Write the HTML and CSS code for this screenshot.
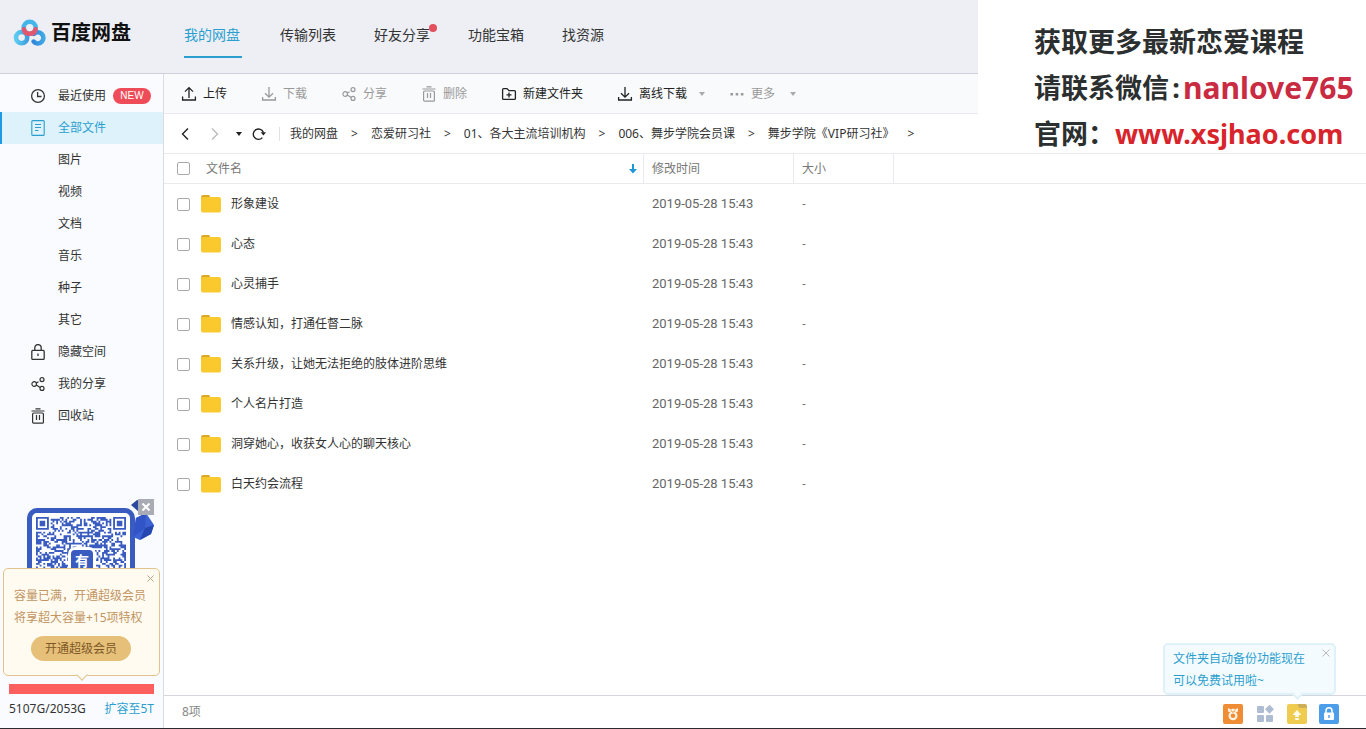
FILE: index.html
```html
<!DOCTYPE html>
<html lang="zh-CN">
<head>
<meta charset="utf-8">
<title>百度网盘</title>
<link rel="stylesheet" href="styles.css">
</head>
<body>
<svg class="defs" width="0" height="0" aria-hidden="true">
  <defs>
    <symbol id="share" viewBox="0 0 16 16"><g fill="none" stroke="currentColor" stroke-width="1.2"><circle cx="4.2" cy="8" r="2.3"/><circle cx="12" cy="3.6" r="2"/><circle cx="12" cy="12.4" r="2"/><path d="M6.3 7 8.6 5.8M6.3 9 10.2 11.4"/></g></symbol>
    <symbol id="trash" viewBox="0 0 16 16"><g fill="none" stroke="currentColor" stroke-width="1.2"><path d="M1.5 3H14.5M5.5.8H10.5M6.5 7V12M9.5 7V12"/><rect x="2.6" y="5" width="10.8" height="10.2" rx="1"/></g></symbol>
    <symbol id="down" viewBox="0 0 16 16"><path d="M8 1V11M4 7.2 8 11.2 12 7.2M1.6 11V14H14.4V11" fill="none" stroke="currentColor" stroke-width="1.3"/></symbol>
    <symbol id="folder" viewBox="0 0 20 18"><path d="M0 3Q0 0 2 0H8L10 3V8H0Z" fill="#d9a928"/><path d="M0 3.6Q0 2 1.6 2H18Q20 2 20 4V15.4Q20 17.4 18 17.4H2Q0 17.4 0 15.4Z" fill="#f9c92e"/></symbol>
    <symbol id="cross" viewBox="0 0 8 8"><path d="M.5 .5 7.5 7.5M7.5 .5 .5 7.5" stroke="currentColor" fill="none"/></symbol>
  </defs>
</svg>
<header class="header">
  <h1 class="brand">
    <svg width="33" height="27" viewBox="0 0 33 27" aria-hidden="true">
      <defs>
        <linearGradient id="left"><stop offset="0" stop-color="#5ccbf0"/><stop offset="1" stop-color="#3c9fe0"/></linearGradient>
        <linearGradient id="right"><stop offset="0" stop-color="#2f88dc"/><stop offset="1" stop-color="#3fa8e6"/></linearGradient>
      </defs>
      <g fill="none" stroke-width="4.6" stroke-linecap="round">
        <circle cx="8.6" cy="18.6" r="5.6" stroke="url(#left)"/>
        <path d="M20.6 22.6A5.6 5.6 0 1 0 21 14.8" stroke="url(#right)"/>
        <circle cx="16.7" cy="8.8" r="6" stroke="#45b6ea"/>
        <path d="M10.9 10.3A6 6 0 0 0 22.5 10.3" stroke="#e2566e"/>
      </g>
    </svg>
    <span>百度网盘</span>
  </h1>
  <nav class="tabs">
    <a class="tab tab-active" href="#">我的网盘</a>
    <a class="tab" href="#">传输列表</a>
    <a class="tab" href="#">好友分享<i class="dot"></i></a>
    <a class="tab" href="#">功能宝箱</a>
    <a class="tab" href="#">找资源</a>
  </nav>
</header>
<div class="body">
  <aside class="sidebar">
    <nav class="menu">
      <a class="item" href="#"><svg class="ico" viewBox="0 0 16 16"><g fill="none" stroke="currentColor" stroke-width="1.3"><circle cx="8" cy="8" r="6.4"/><path d="M7.6 4V8.5H11.5"/></g></svg>最近使用<b class="new">NEW</b></a>
      <a class="item item-active" href="#"><svg class="ico" viewBox="0 0 16 16"><g fill="none" stroke="currentColor" stroke-width="1.1"><rect x="1.8" y=".6" width="12.4" height="14.8" rx="1"/><path d="M5 4.5H11M5 7.5H11M5 10.5H8.5"/></g></svg>全部文件</a>
      <a class="item sub" href="#">图片</a>
      <a class="item sub" href="#">视频</a>
      <a class="item sub" href="#">文档</a>
      <a class="item sub" href="#">音乐</a>
      <a class="item sub" href="#">种子</a>
      <a class="item sub" href="#">其它</a>
      <a class="item" href="#"><svg class="ico" viewBox="0 0 16 16"><g fill="none" stroke="currentColor" stroke-width="1.3"><rect x="1.8" y="6.4" width="12.4" height="9" rx="1"/><path d="M4.8 6.4V3.8A3.2 3.2 0 0 1 11.2 3.8V6.4M8 9.4V12"/></g></svg>隐藏空间</a>
      <a class="item" href="#"><svg class="ico"><use href="#share"/></svg>我的分享</a>
      <a class="item" href="#"><svg class="ico"><use href="#trash"/></svg>回收站</a>
    </nav>
    <div class="promo">
      <div class="qr-frame">
        <svg class="qr" viewBox="0 0 49 49" aria-label="二维码"><path id="modules" fill="#3a5cc0"/></svg>
        <span class="qr-mark">有</span>
      </div>
      <svg class="gems" width="24" height="44" viewBox="0 0 24 44" aria-hidden="true"><path d="M1 6 7 1 13 3V10L9 13Z" fill="#2b4a9e"/><path d="M6 19 16 14 24 26 21 35 10 41 3 38Z" fill="#3c62d4"/><path d="M6 19 16 14 15 29 3 38Z" fill="#3154c6"/><path d="M15 29 24 26 21 35 10 41Z" fill="#2646b2"/></svg>
      <button class="promo-close" aria-label="关闭"><svg width="8" height="8" stroke-width="2"><use href="#cross"/></svg></button>
    </div>
    <section class="notice">
      <button class="x notice-x" aria-label="关闭"><svg width="7" height="7"><use href="#cross"/></svg></button>
      <p>容量已满，开通超级会员</p>
      <p>将享超大容量+15项特权</p>
      <button class="vip">开通超级会员</button>
    </section>
    <div class="quota-bar"></div>
    <div class="quota"><span>5107G/2053G</span><a href="#">扩容至5T</a></div>
  </aside>
  <main class="main">
    <div class="toolbar">
      <button class="tool"><svg class="ico" viewBox="0 0 16 16"><path d="M8 12V1.8M4 5.6 8 1.6 12 5.6M1.6 10.6V14H14.4V10.6" fill="none" stroke="currentColor" stroke-width="1.3"/></svg>上传</button>
      <button class="tool off"><svg class="ico"><use href="#down"/></svg>下载</button>
      <button class="tool off"><svg class="ico"><use href="#share"/></svg>分享</button>
      <button class="tool off"><svg class="ico"><use href="#trash"/></svg>删除</button>
      <button class="tool"><svg class="ico" viewBox="0 0 16 16"><path d="M1.6 3.6Q1.6 2.6 2.6 2.6H6L8 4.6H13.4Q14.4 4.6 14.4 5.6V12.4Q14.4 13.4 13.4 13.4H2.6Q1.6 13.4 1.6 12.4ZM8 6.4V11.4M5.5 8.9H10.5" fill="none" stroke="currentColor" stroke-width="1.3"/></svg>新建文件夹</button>
      <button class="tool with-caret"><svg class="ico"><use href="#down"/></svg>离线下载<i class="caret"></i></button>
      <button class="tool off with-caret"><svg class="ico" viewBox="0 0 16 16"><path d="M1.5 7H4V9.4H1.5ZM6.7 7H9.2V9.4H6.7ZM11.9 7H14.4V9.4H11.9Z" fill="currentColor"/></svg>更多<i class="caret caret-far"></i></button>
    </div>
    <div class="path">
      <div class="history">
        <button aria-label="后退"><svg width="8" height="12" viewBox="0 0 8 12"><path d="M7 .5 1.5 6 7 11.5" fill="none" stroke="#222" stroke-width="1.4"/></svg></button>
        <button aria-label="前进"><svg width="8" height="12" viewBox="0 0 8 12"><path d="M1 .5 6.5 6 1 11.5" fill="none" stroke="#bbb" stroke-width="1.4"/></svg></button>
        <button aria-label="历史"><svg width="6" height="4" viewBox="0 0 6 4"><path d="M0 0H6L3 4Z" fill="#222"/></svg></button>
        <button aria-label="刷新"><svg width="14" height="14" viewBox="0 0 14 14"><path d="M10.4 10.6A5.2 5.2 0 1 1 11.4 5.4" fill="none" stroke="#222" stroke-width="1.4"/><path d="M8.6 5.2H14L11.5 8.6Z" fill="#222"/></svg></button>
      </div>
      <nav class="crumbs">
        <a href="#">我的网盘</a><span>&gt;</span><a href="#">恋爱研习社</a><span>&gt;</span><a href="#">01、各大主流培训机构</a><span>&gt;</span><a href="#">006、舞步学院会员课</a><span>&gt;</span><a href="#">舞步学院《VIP研习社》</a><span>&gt;</span>
      </nav>
    </div>
    <div class="list">
      <table class="files">
        <colgroup><col class="c-name"><col class="c-time"><col class="c-size"><col></colgroup>
        <thead>
          <tr>
            <th><div class="cell"><input type="checkbox" aria-label="全选"><span class="head-name">文件名</span><svg class="sort" width="8" height="10" viewBox="0 0 8 10"><path d="M3 0H5V5H8L4 9.6 0 5H3Z" fill="#1e96d8"/></svg></div></th>
            <th>修改时间</th><th>大小</th><th></th>
          </tr>
        </thead>
        <tbody>
          <tr><td><label class="cell"><input type="checkbox"><svg class="fold"><use href="#folder"/></svg>形象建设</label></td><td class="time">2019-05-28 15:43</td><td>-</td><td></td></tr>
          <tr><td><label class="cell"><input type="checkbox"><svg class="fold"><use href="#folder"/></svg>心态</label></td><td class="time">2019-05-28 15:43</td><td>-</td><td></td></tr>
          <tr><td><label class="cell"><input type="checkbox"><svg class="fold"><use href="#folder"/></svg>心灵捕手</label></td><td class="time">2019-05-28 15:43</td><td>-</td><td></td></tr>
          <tr><td><label class="cell"><input type="checkbox"><svg class="fold"><use href="#folder"/></svg>情感认知，打通任督二脉</label></td><td class="time">2019-05-28 15:43</td><td>-</td><td></td></tr>
          <tr><td><label class="cell"><input type="checkbox"><svg class="fold"><use href="#folder"/></svg>关系升级，让她无法拒绝的肢体进阶思维</label></td><td class="time">2019-05-28 15:43</td><td>-</td><td></td></tr>
          <tr><td><label class="cell"><input type="checkbox"><svg class="fold"><use href="#folder"/></svg>个人名片打造</label></td><td class="time">2019-05-28 15:43</td><td>-</td><td></td></tr>
          <tr><td><label class="cell"><input type="checkbox"><svg class="fold"><use href="#folder"/></svg>洞穿她心，收获女人心的聊天核心</label></td><td class="time">2019-05-28 15:43</td><td>-</td><td></td></tr>
          <tr><td><label class="cell"><input type="checkbox"><svg class="fold"><use href="#folder"/></svg>白天约会流程</label></td><td class="time">2019-05-28 15:43</td><td>-</td><td></td></tr>
        </tbody>
      </table>
    </div>
    <footer class="status">
      <span>8项</span>
      <div class="apps">
        <button aria-label="勋章"><svg viewBox="0 0 20 20"><rect width="20" height="20" rx="2" fill="#f08c34"/><path d="M5 4 8 5.4 10 4.6 12 5.4 15 4V7.4L10 9 5 7.4Z" fill="#fff3e4"/><circle cx="10" cy="11.8" r="3.4" fill="none" stroke="#fff3e4" stroke-width="2.2"/><path d="M7.6 6.4 10 8.4 12.4 6.4" fill="none" stroke="#f08c34"/></svg></button>
        <button aria-label="应用"><svg viewBox="0 0 20 20"><g fill="#afbdd3"><rect x="2" y="2" width="7" height="7" rx="1"/><rect x="2" y="11" width="7" height="7" rx="1"/><rect x="11" y="11" width="7" height="7" rx="1"/><path d="M14.5 .8 19 5.3 14.5 9.8 10 5.3Z"/></g></svg></button>
        <button aria-label="自动备份"><svg viewBox="0 0 20 20"><path d="M2 0H10L12 3H20V18Q20 20 18 20H2Q0 20 0 18V2Q0 0 2 0Z" fill="#efcc50"/><path d="M10 0H18Q20 0 20 2V4H12Z" fill="#cfae56"/><path d="M10 6 14.5 11H11.8V13H8.2V11H5.5ZM8.2 14H11.8V16H8.2Z" fill="#fffbe8"/></svg></button>
        <button aria-label="锁定"><svg viewBox="0 0 20 20"><rect width="20" height="20" rx="2" fill="#4c9dea"/><rect x="5" y="8.6" width="10" height="7.4" rx="1" fill="#fff"/><path d="M7 9V6.8A3 3 0 0 1 13 6.8V9" fill="none" stroke="#fff" stroke-width="1.5"/><path d="M10 11V14" stroke="#4c9dea" stroke-width="1.4"/></svg></button>
      </div>
      <div class="tip">
        <p>文件夹自动备份功能现在</p>
        <p>可以免费试用啦~</p>
        <button class="x tip-x" aria-label="关闭"><svg width="8" height="8"><use href="#cross"/></svg></button>
      </div>
    </footer>
  </main>
</div>
<aside class="ad">
  <p>获取更多最新恋爱课程</p>
  <p>请联系微信<span class="colon">:</span><strong class="wechat">nanlove765</strong></p>
  <p>官网：<a class="site" href="#">www.xsjhao.com</a></p>
</aside>
<script src="qr.js"></script>
</body>
</html>
```
FILE: styles.css
```css
* { box-sizing: border-box; }
body {
  margin: 0;
  height: 100vh;
  display: flex;
  flex-direction: column;
  position: relative;
  overflow: hidden;
  background: #fff;
  border-bottom: 1px solid #2b2b2f;
  color: #333;
  font: 12px/22px "Noto Sans", "Noto Sans CJK SC", sans-serif;
}
p, h1 { margin: 0; }
a { color: inherit; text-decoration: none; }
button { border: 0; padding: 0; background: none; font: inherit; color: inherit; }
svg { display: block; flex: none; }
.defs { position: absolute; }
.ico { width: 16px; height: 16px; }

.header {
  flex: none;
  display: flex;
  align-items: center;
  height: 74px;
  background: #edeff5;
  border-bottom: 1px solid #cdd0da;
}
.brand {
  width: 184px;
  display: flex;
  align-items: center;
  gap: 5px;
  padding: 0 0 8px 13px;
  font-size: 20px;
  line-height: 30px;
  color: #111;
}
.tabs { display: flex; gap: 38px; font-size: 14px; }
.tab { position: relative; padding: 8px 0 10px; border-bottom: 2px solid transparent; }
.tab-active { padding-right: 2px; color: #2a9fcf; border-color: #2a9fcf; }
.dot { position: absolute; right: -7px; top: 8px; width: 8px; height: 8px; border-radius: 50%; background: #e2505e; }

.body { flex: 1; display: flex; min-height: 0; }
.sidebar {
  width: 164px;
  flex: none;
  display: flex;
  flex-direction: column;
  background: #f9fbfe;
  border-right: 1px solid #d9dce2;
}
.menu { padding-top: 6px; margin-bottom: auto; }
.item { display: flex; align-items: center; gap: 12px; height: 32px; padding-left: 28px; border-left: 2px solid transparent; }
.sub { padding-left: 56px; }
.item-active { background: #def2fb; border-color: #1e9ae0; color: #2a9fcf; }
.new {
  margin-left: -5px;
  width: 38px;
  border-radius: 8px;
  background: #ee4c58;
  color: #fff;
  font: 500 10px/16px "Liberation Sans", sans-serif;
  text-align: center;
}
.promo { position: relative; height: 69px; padding: 9px 0 0 27px; overflow: hidden; }
.qr-frame { position: relative; width: 108px; height: 108px; padding: 4px; border: 5px solid #3a5cc0; border-radius: 10px; background: #fff; }
.qr { width: 90px; height: 90px; }
.qr-mark {
  position: absolute;
  left: 36px;
  top: 34px;
  width: 28px;
  height: 28px;
  border: 3px solid #fff;
  border-radius: 7px;
  background: #3a5cc0;
  color: #fff;
  font-weight: 700;
  font-size: 14px;
  line-height: 22px;
  text-align: center;
}
.gems { position: absolute; left: 130px; top: 0; }
.promo-close { position: absolute; left: 138px; top: 0; width: 16px; height: 16px; display: grid; place-items: center; background: #a9acb5; color: #fff; }
.notice {
  position: relative;
  margin: 0 3px 8px;
  padding: 16px 0 14px 10px;
  border: 1px solid #e3c38d;
  border-radius: 5px;
  background: #fffbf0;
  color: #c29562;
  white-space: nowrap;
}
.notice::after, .tip::after {
  content: "";
  position: absolute;
  width: 7px;
  height: 7px;
  background: inherit;
  border: solid #e3c38d;
  border-width: 0 1px 1px 0;
  transform: rotate(45deg);
}
.notice::after { left: 74px; bottom: -4px; }
.x { position: absolute; }
.notice-x { right: 5px; top: 6px; color: #b29c78; }
.vip { display: block; width: 100px; height: 25px; margin: 7px 0 0 17px; border-radius: 13px; background: #e6c079; color: #7d5827; }
.quota-bar { height: 10px; margin: 0 9px; background: #fd5e5e; }
.quota { display: flex; justify-content: space-between; padding: 4px 9px 8px; }
.quota a { color: #2a9fcf; }

.main { flex: 1; min-width: 0; display: flex; flex-direction: column; }
.toolbar { flex: none; display: flex; height: 40px; padding-left: 17px; background: #f9fafc; border-bottom: 1px solid #e8eaee; }
.tool { display: flex; align-items: center; gap: 6px; margin-right: 34px; color: #222; }
.off { color: #999; }
.with-caret { margin-right: 24px; }
.caret { margin-left: 6px; border: solid transparent; border-width: 4px 3px 0; border-top-color: #aaa; }
.caret-far { margin-left: 9px; }
.path { flex: none; display: flex; align-items: center; height: 39px; }
.history { display: grid; grid-template-columns: 30px 25px 16px 14px; align-items: center; width: 116px; padding-left: 17px; border-right: 1px solid #e2e2e2; }
.crumbs { display: flex; gap: 13px; padding-left: 10px; white-space: nowrap; }

.list { flex: 1; min-height: 0; border-top: 1px solid #eaebee; }
.files { width: 100%; table-layout: fixed; border-collapse: separate; border-spacing: 0; }
.c-name { width: 480px; }
.c-time { width: 150px; }
.c-size { width: 100px; }
th, td { padding: 0 8px; text-align: left; font-weight: 400; color: #777; }
th { height: 30px; border: solid #e8eaee; border-width: 0 1px 1px 0; }
th:last-child { border-right: 0; }
td { height: 40px; }
th:first-child, td:first-child { padding: 0 6px 0 13px; }
td:first-child { color: #333; }
.time { font-family: Roboto, sans-serif; font-size: 13px; color: #666; }
.cell { display: flex; align-items: center; gap: 10px; }
.head-name { margin: 0 auto 0 6px; }
input { appearance: none; flex: none; width: 13px; height: 13px; margin: 0; border: 1px solid #aaa; border-radius: 2px; background: #fff; }
.fold { width: 20px; height: 18px; margin-left: 1px; }

.status { flex: none; position: relative; display: flex; align-items: center; justify-content: space-between; height: 33px; padding: 0 27px 0 18px; border-top: 1px solid #d3d6dc; color: #888; }
.apps { display: flex; gap: 12px; padding-top: 4px; }
.apps svg { width: 20px; height: 20px; }
.tip { position: absolute; right: 30px; bottom: 33px; width: 173px; padding: 3px 8px 1px; border: 2px solid #dff1f8; border-radius: 5px; background: #f4fbfe; color: #2a9fcf; }
.tip::after { right: 32px; bottom: -5px; border-color: #dff1f8; border-width: 0 2px 2px 0; }
.tip-x { right: 4px; top: 4px; color: #bbb; }

.ad { position: absolute; top: 0; right: 0; width: 388px; height: 153px; padding: 19px 0 0 56px; background: #fff; color: #2c2f2f; font-size: 27px; font-weight: 700; line-height: 46px; white-space: nowrap; }
.ad p { display: flex; height: 46px; }
.colon { width: 14px; text-align: center; }
.wechat { color: #c92c42; font-size: 30px; font-weight: 700; }
.site { color: #d8242b; }
```
FILE: qr.js
```js
// Fills the promo code with modules: three finder squares plus a fixed data pattern.
(function () {
  var size = 49, seed = 7, d = "";
  function next() {
    seed = (seed * 16807) % 2147483647;
    return seed / 2147483647;
  }
  function finder(x, y) {
    var corners = [[0, 0], [size - 7, 0], [0, size - 7]];
    for (var i = 0; i < 3; i++) {
      var u = x - corners[i][0], v = y - corners[i][1];
      if (u >= -1 && u <= 7 && v >= -1 && v <= 7) {
        var r = Math.max(Math.abs(u - 3), Math.abs(v - 3));
        return r === 3 || r <= 1;
      }
    }
    return null;
  }
  for (var y = 0; y < size; y++) {
    for (var x = 0; x < size; x++) {
      var f = finder(x, y), on = next() < 0.54;
      if (f === null ? on : f) d += "M" + x + " " + y + "h1v1h-1z";
    }
  }
  document.getElementById("modules").setAttribute("d", d);
})();
```
